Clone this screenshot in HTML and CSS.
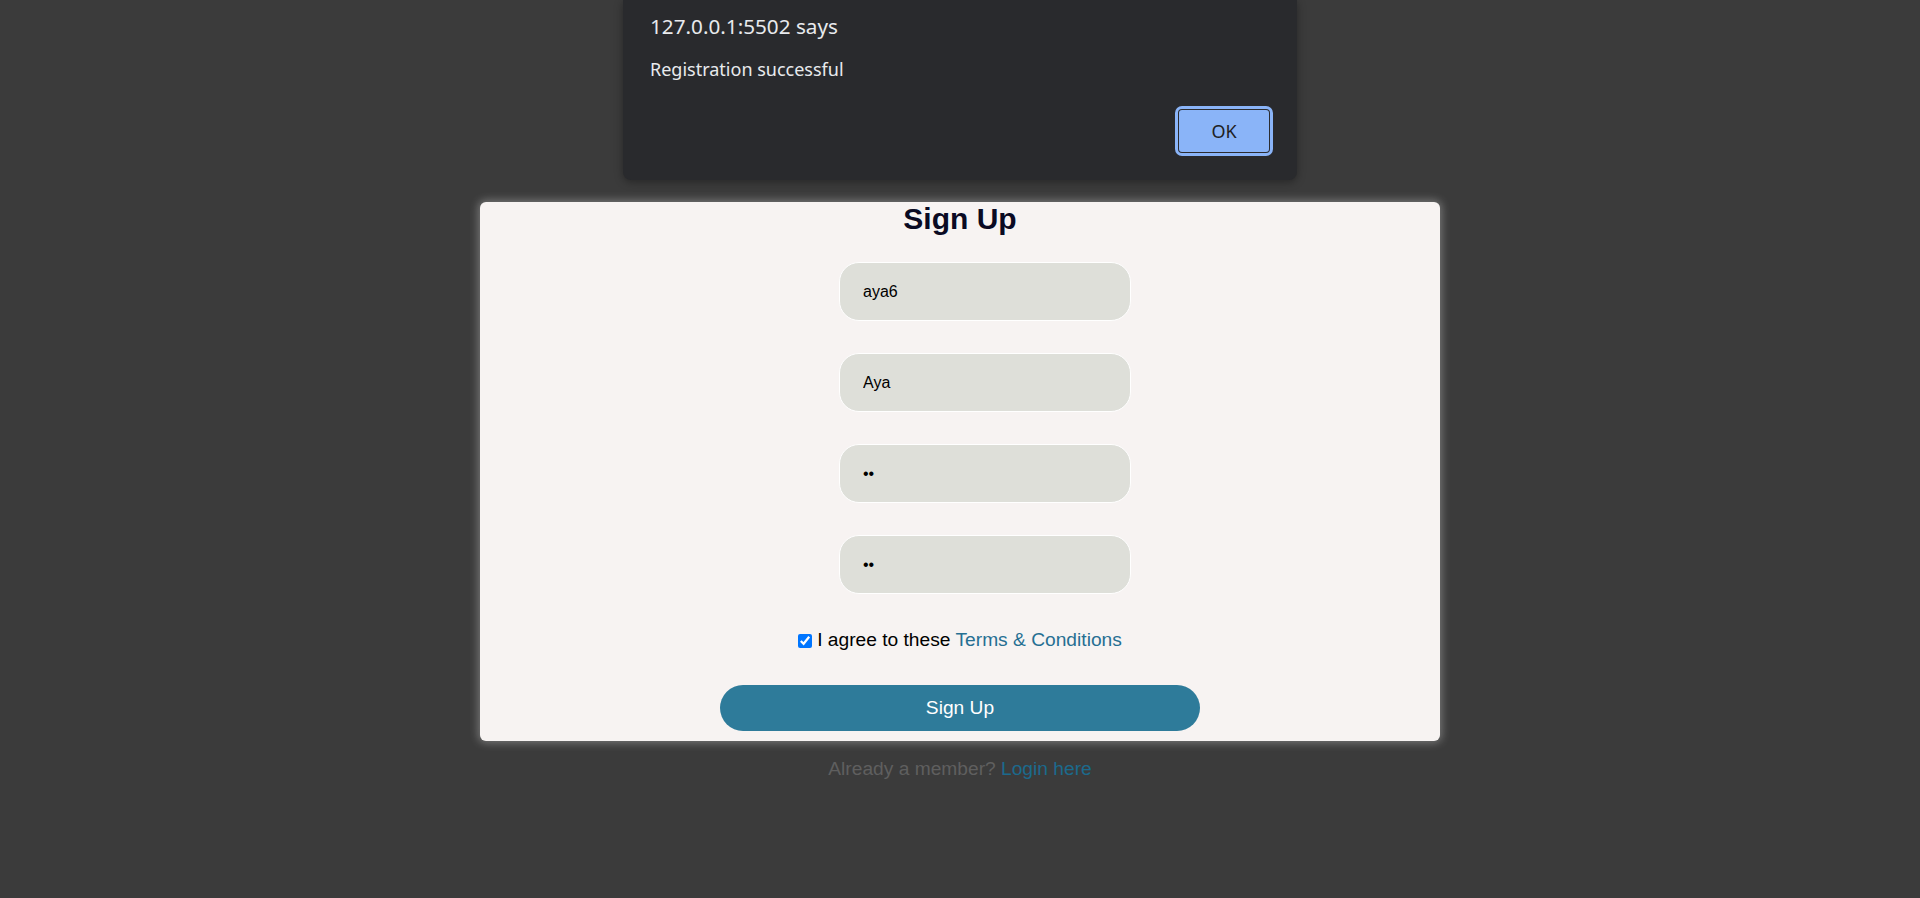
FILE: index.html
```html
<!DOCTYPE html>
<html lang="en">
<head>
<meta charset="utf-8">
<title>Sign Up</title>
<link rel="stylesheet" href="styles.css">
</head>
<body>
<main class="page">
  <section class="card">
    <h1 class="card-title">Sign Up</h1>
    <form class="form">
      <input class="field" type="text" value="aya6">
      <input class="field" type="text" value="Aya">
      <input class="field" type="password" value="ab">
      <input class="field" type="password" value="ab">
      <label class="agree"><input class="check" type="checkbox" checked> I agree to these <a class="link-terms" href="#">Terms &amp; Conditions</a></label>
      <button class="submit" type="button">Sign Up</button>
    </form>
  </section>
  <p class="footer">Already a member? <a class="link-login" href="#">Login here</a></p>
</main>
<div class="alert" role="alertdialog">
  <div class="alert-title">127.0.0.1:5502 says</div>
  <div class="alert-msg">Registration successful</div>
  <div class="alert-actions"><button class="alert-ok" type="button">OK</button></div>
</div>
</body>
</html>
```
FILE: styles.css
```css
html, body {
  margin: 0;
  padding: 0;
}
body {
  background: #3b3b3b;
  font-family: "Liberation Sans", Arial, sans-serif;
  font-size: 19.2px;
  min-height: 898px;
}
.page {
  display: flex;
  flex-direction: column;
  align-items: center;
  padding-top: 202px;
}
.card {
  box-sizing: border-box;
  width: 960px;
  background: #f7f3f2;
  border-radius: 6px;
  box-shadow: 0 0 8px 2px rgba(255, 255, 255, 0.3);
  padding: 0 0 10px;
  text-align: center;
}
.card-title {
  margin: 0;
  font-size: 30px;
  line-height: 34px;
  font-weight: bold;
  color: #0a0a23;
}
.form {
  display: flex;
  flex-direction: column;
  align-items: center;
  margin-top: 26px;
}
.field {
  box-sizing: border-box;
  width: 292px;
  height: 59px;
  margin: 0 0 32px 50px;
  padding: 0 23px;
  border: 1px solid #ffffff;
  border-radius: 20px;
  background: #dedfd9;
  font-family: "Liberation Sans", Arial, sans-serif;
  font-size: 16px;
  color: #000;
  outline: none;
}
.field:nth-of-type(4) {
  margin-bottom: 35px;
}
.agree {
  display: flex;
  align-items: center;
  line-height: 22px;
  color: #000;
}
.check {
  width: 14px;
  height: 14px;
  margin: 1px 5px 0 0;
}
.link-terms {
  color: #266f92;
  text-decoration: none;
  margin-left: 5px;
}
.submit {
  margin-top: 34px;
  width: 480px;
  height: 46px;
  border: none;
  border-radius: 23px;
  background: #2e7b9a;
  color: #ffffff;
  font-family: "Liberation Sans", Arial, sans-serif;
  font-size: 19.2px;
}
.footer {
  margin: 17px 0 0;
  line-height: 22px;
  color: #5f5f5f;
}
.link-login {
  color: #1b6a8d;
  text-decoration: none;
}
.alert {
  position: absolute;
  top: 0;
  left: 623px;
  width: 674px;
  height: 180px;
  box-sizing: border-box;
  padding: 12px 24px 24px 27px;
  background: #292a2d;
  border-radius: 0 0 8px 8px;
  box-shadow: 0 2px 8px rgba(0, 0, 0, 0.35);
  font-family: "Noto Sans", "Open Sans", sans-serif;
  color: #e8eaed;
  display: flex;
  flex-direction: column;
}
.alert-title {
  font-size: 20.7px;
  line-height: 28px;
}
.alert-msg {
  margin-top: 17px;
  font-size: 18px;
  line-height: 24px;
}
.alert-actions {
  margin-top: auto;
  display: flex;
  justify-content: flex-end;
}
.alert-ok {
  box-sizing: border-box;
  width: 98px;
  height: 50px;
  border: 2px solid #2b2c30;
  outline: 3px solid #8ab4f8;
  outline-offset: -3px;
  border-radius: 7px;
  background: #8ab4f8;
  color: #202124;
  font-family: "Noto Sans", "Open Sans", sans-serif;
  font-size: 18px;
  box-shadow: inset 0 0 0 2px #2b2c30;
}
```
